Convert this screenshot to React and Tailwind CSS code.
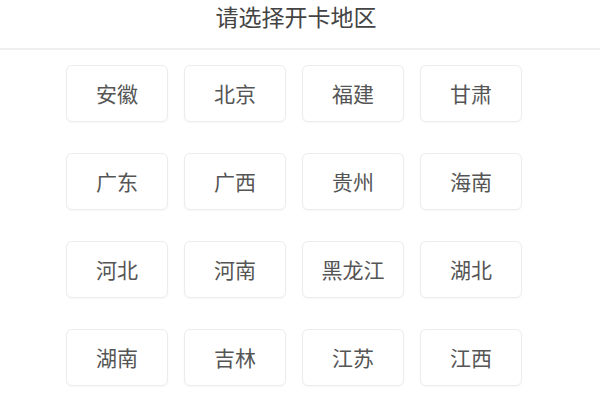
import React from 'react';

const REGIONS = [
  '安徽', '北京', '福建', '甘肃',
  '广东', '广西', '贵州', '海南',
  '河北', '河南', '黑龙江', '湖北',
  '湖南', '吉林', '江苏', '江西',
];

const App = () => {
  return (
    <div
      className="w-[600px] h-[400px] overflow-hidden bg-white"
      style={{ fontFamily: '"Noto Sans CJK SC", "Noto Sans", sans-serif' }}
    >
      {/* Header */}
      <header className="h-[50px] flex items-center justify-center border-b-2 border-[#f0f0f0]">
        <h1 className="text-[23px] leading-none text-[#444] mr-[8px] pb-[16px] pt-[0px] -mt-[0px]">请选择开卡地区</h1>
      </header>

      {/* Region grid */}
      <div className="grid grid-cols-[repeat(4,102px)] gap-x-[16px] gap-y-[31px] pl-[66px] pt-[15px]">
        {REGIONS.map((name) => (
          <button
            key={name}
            className="h-[57px] rounded-[6px] border border-[#ececec] bg-white shadow-[0_1px_2px_rgba(0,0,0,0.04)] text-[21px] text-[#555] flex items-center justify-center"
          >
            {name}
          </button>
        ))}
      </div>
    </div>
  );
};

export default App;
